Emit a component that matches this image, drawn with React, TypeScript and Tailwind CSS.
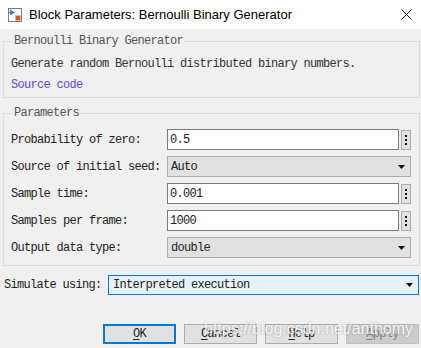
import React from "react";

const MONO = "font-['Liberation_Mono',monospace] text-[12px] tracking-[-0.7px] leading-[16px] text-[#222]";

function BlockIcon() {
  return (
    <svg width="14" height="14" viewBox="0 0 14 14">
      <rect x="0.5" y="0.5" width="13" height="13" fill="#fff" stroke="#7a7a7a" />
      <path d="M2 1.5 L2 7.5 L7 4.5 Z" fill="#2e7fd6" />
      <rect x="1" y="4" width="3" height="1" fill="#2e7fd6" />
      <rect x="7.5" y="7.5" width="5" height="5" fill="#d9532c" />
    </svg>
  );
}

function CloseIcon() {
  return (
    <svg width="11" height="11" viewBox="0 0 11 11">
      <path d="M0.5 0.5 L10.5 10.5 M10.5 0.5 L0.5 10.5" stroke="#111" strokeWidth="1" />
    </svg>
  );
}

function Arrow() {
  return (
    <svg width="7" height="4" viewBox="0 0 7 4" className="shrink-0">
      <path d="M0 0 H7 L3.5 4 Z" fill="#111" />
    </svg>
  );
}

function TextRow({ label, value }: { label: string; value: string }) {
  return (
    <div className="flex items-center h-[21px]">
      <div className={`w-[156px] ${MONO}`}>{label}</div>
      <div className={`w-[232px] h-[21px] bg-white border border-[#7a7a7a] flex items-center pl-[2px] ${MONO}`}>
        {value}
      </div>
      <div className="ml-[2px] w-[10px] h-[20px] bg-[#e1e1e1] border border-[#adadad] flex flex-col items-center justify-center gap-[2px]">
        <span className="block w-[2px] h-[2px] bg-[#111]" />
        <span className="block w-[2px] h-[2px] bg-[#111]" />
        <span className="block w-[2px] h-[2px] bg-[#111]" />
      </div>
    </div>
  );
}

function SelectRow({ label, value }: { label: string; value: string }) {
  return (
    <div className="flex items-center h-[21px]">
      <div className={`w-[156px] ${MONO}`}>{label}</div>
      <div className={`w-[244px] h-[21px] bg-[#e1e1e1] border border-[#adadad] flex items-center justify-between pl-[3px] pr-[5px] ${MONO}`}>
        <span>{value}</span>
        <Arrow />
      </div>
    </div>
  );
}

function Btn({ first, rest, primary, disabled }: { first: string; rest: string; primary?: boolean; disabled?: boolean }) {
  return (
    <div
      className={`w-[73px] h-[20px] flex items-center justify-center ${MONO} ${
        primary
          ? "border-2 border-[#0078d7] bg-[#e1e1e1]"
          : disabled
          ? "border border-[#bfbfbf] bg-[#cccccc] text-[#838383]"
          : "border border-[#adadad] bg-[#e1e1e1]"
      }`}
    >
      <span className="underline underline-offset-2">{first}</span>
      <span>{rest}</span>
    </div>
  );
}

export default function App() {
  return (
    <div className="relative w-[421px] h-[348px] bg-[#f0f0f0] overflow-hidden">
      {/* Title bar */}
      <div className="h-[29px] bg-white flex items-center">
        <div className="ml-[8px] mt-[1px]">
          <BlockIcon />
        </div>
        <div className="ml-[7px] font-['Liberation_Sans',Arial,sans-serif] text-[13px] text-black">
          Block Parameters: Bernoulli Binary Generator
        </div>
        <div className="ml-auto mr-[9px] mt-[-1px]">
          <CloseIcon />
        </div>
      </div>

      {/* Description group */}
      <fieldset className="ml-[3px] mt-[4px] w-[417px] border border-[#dcdcdc] px-[7px] pb-[4px]">
        <legend className={`ml-[2px] px-[1px] text-[#555] ${MONO}`}>Bernoulli Binary Generator</legend>
        <p className={`mt-[7px] ${MONO} text-[#333]`}>Generate random Bernoulli distributed binary numbers.</p>
        <p className={`mt-[5px] ${MONO} !text-[#5b4fc8]`}>Source code</p>
      </fieldset>

      {/* Parameters group */}
      <fieldset className="ml-[3px] mt-[7px] w-[417px] border border-[#dcdcdc] px-[7px] pb-[7px]">
        <legend className={`ml-[2px] px-[1px] text-[#555] ${MONO}`}>Parameters</legend>
        <div className="mt-[8px] flex flex-col gap-[6px]">
          <TextRow label="Probability of zero:" value="0.5" />
          <SelectRow label="Source of initial seed:" value="Auto" />
          <TextRow label="Sample time:" value="0.001" />
          <TextRow label="Samples per frame:" value="1000" />
          <SelectRow label="Output data type:" value="double" />
        </div>
      </fieldset>

      {/* Simulate using */}
      <div className="mt-[9px] flex items-center h-[20px]">
        <div className={`ml-[4px] w-[104px] ${MONO}`}>Simulate using:</div>
        <div className={`w-[311px] h-[20px] bg-[#e5f1fb] border border-[#0078d7] flex items-center justify-between pl-[4px] pr-[5px] ${MONO}`}>
          <span>Interpreted execution</span>
          <Arrow />
        </div>
      </div>

      {/* Buttons */}
      <div className="mt-[29px] flex justify-end gap-[8px] pr-[2px]">
        <Btn first="O" rest="K" primary />
        <Btn first="C" rest="ancel" />
        <Btn first="H" rest="elp" />
        <Btn first="A" rest="pply" disabled />
      </div>

      {/* Watermark */}
      <div className="absolute left-[204px] top-[320px] font-['Liberation_Sans',Arial,sans-serif] text-[16px] leading-[18px] text-white/90 [text-shadow:0_0_2px_rgba(90,90,90,0.55)] pointer-events-none">
        https://blog.csdn.net/anthomy
      </div>
    </div>
  );
}
